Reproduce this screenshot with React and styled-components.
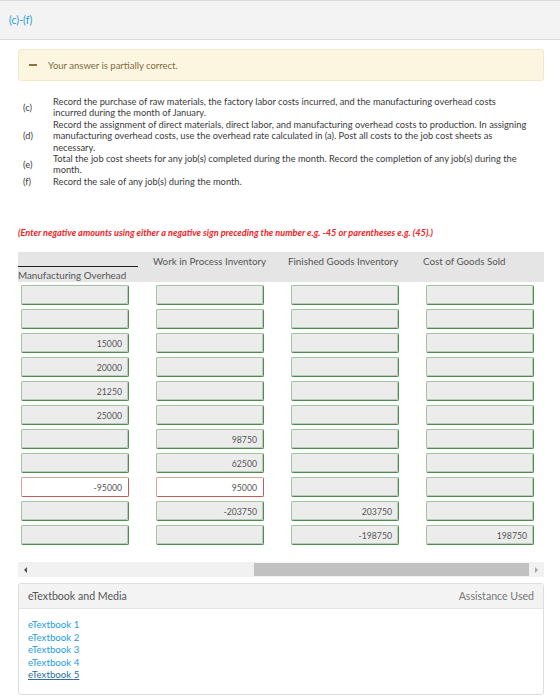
import React from 'react'
import styled, { createGlobalStyle } from 'styled-components'

const GlobalStyle = createGlobalStyle`
  body {
    margin: 0;
    background: #fff;
    font-family: Lato, 'Open Sans', sans-serif;
    color: #333;
  }
`

const Page = styled.div`
  width: 560px;
`

const SectionHeader = styled.div`
  height: 38px;
  display: flex;
  align-items: center;
  padding-left: 9px;
  background: #f3f3f3;
  border-top: 1px solid #dcdcdc;
  border-bottom: 1px solid #dcdcdc;
  color: #2b9be0;
  font-size: 10.5px;
`

const Body = styled.div`
  padding: 0 16px 0 18px;
`

const Banner = styled.div`
  margin-top: 9px;
  height: 32px;
  box-sizing: border-box;
  display: flex;
  align-items: center;
  gap: 11px;
  padding-left: 10px;
  background: #fcf5e0;
  border: 1px solid #f3e7c7;
  border-radius: 3px;
  color: #7d6b3f;
  font-size: 9.5px;
`

const Dash = styled.span`
  width: 8px;
  height: 2px;
  background: #8a733c;
`

const TaskList = styled.div`
  margin-top: 15px;
  display: grid;
  grid-template-columns: 30px 478px;
  align-items: center;
  padding-left: 5px;
  font-size: 9.3px;
  line-height: 11.4px;
  color: #3a3a3a;
`

const TaskLabel = styled.span``

const TaskText = styled.span``

const Note = styled.div`
  margin-top: 40px;
  color: #f0221e;
  font-size: 9.2px;
  font-weight: 700;
  font-style: italic;
  line-height: 12px;
`

const Scroller = styled.div`
  margin-top: 13px;
  width: 526px;
  overflow: hidden;
`

const Sheet = styled.div`
  display: grid;
  grid-template-columns: repeat(4, 135px);
  row-gap: 4px;
  color: #555;
`

const HeadRow = styled.div`
  grid-column: 1 / -1;
  display: grid;
  grid-template-columns: repeat(4, 135px);
  height: 30px;
  margin-bottom: -1px;
  background: #e5e5e5;
  width: 526px;
  font-size: 9.8px;
`

const HeadCell = styled.div`
  padding-top: 3px;
  white-space: nowrap;
`

const AccountHead = styled.div`
  display: flex;
  flex-direction: column;
  justify-content: flex-end;
`

const AccountTitle = styled.span`
  width: 120px;
  border-top: 1px solid #222;
  padding: 2px 0 1px;
  white-space: nowrap;
`

const Cell = styled.div`
  padding-left: 3px;
`

const Field = styled.div`
  box-sizing: border-box;
  width: 108px;
  height: 20px;
  display: flex;
  align-items: center;
  justify-content: flex-end;
  padding-right: 6px;
  border: 1px solid;
  border-radius: 2px;
  font-size: 8.7px;
  color: #555;
  background: ${p => (p.$wrong ? '#fff' : '#ececec')};
  border-color: ${p =>
    p.$wrong ? '#d9a0a0 #c25b5b #c25b5b #d9a0a0' : '#a2c4a2 #4f8c4f #4f8c4f #a2c4a2'};
  box-shadow: ${p =>
    p.$wrong ? 'none' : 'inset -1px -1px 0 rgba(90, 150, 90, 0.35)'};
`

const ScrollBar = styled.div`
  margin-top: 17px;
  width: 526px;
  height: 15px;
  display: flex;
  align-items: stretch;
  background: #f1f1f1;
`

const ScrollArrow = styled.div`
  width: 15px;
  display: flex;
  align-items: center;
  justify-content: center;
  &::before {
    content: '';
    border-top: 3px solid transparent;
    border-bottom: 3px solid transparent;
    ${p =>
      p.$right
        ? 'border-left: 3px solid #a3a3a3;'
        : 'border-right: 3px solid #505050;'}
  }
`

const ScrollTrack = styled.div`
  flex: 1;
  display: flex;
  align-items: center;
  justify-content: flex-end;
`

const ScrollThumb = styled.div`
  height: 13px;
  width: 275px;
  background: #c1c1c1;
`

const Panel = styled.div`
  margin-top: 6px;
  width: 526px;
  height: 112px;
  box-sizing: border-box;
  border: 1px solid #dedede;
  border-radius: 3px;
  overflow: hidden;
`

const PanelHead = styled.div`
  height: 24px;
  display: flex;
  align-items: center;
  justify-content: space-between;
  padding: 0 9px;
  background: #f3f3f3;
  border-bottom: 1px solid #e4e4e4;
  font-size: 10.6px;
  color: #555;
`

const Assist = styled.span`
  color: #777;
`

const LinkList = styled.div`
  display: flex;
  flex-direction: column;
  padding: 9px 9px 0;
  font-size: 9.7px;
  line-height: 12.5px;
`

const BookLink = styled.a`
  align-self: flex-start;
  color: ${p => (p.$active ? '#2d6ea0' : '#1e9be6')};
  text-decoration: ${p => (p.$active ? 'underline' : 'none')};
`

const tasks = [
  ['(c)', 'Record the purchase of raw materials, the factory labor costs incurred, and the manufacturing overhead costs incurred during the month of January.'],
  ['(d)', 'Record the assignment of direct materials, direct labor, and manufacturing overhead costs to production. In assigning manufacturing overhead costs, use the overhead rate calculated in (a). Post all costs to the job cost sheets as necessary.'],
  ['(e)', 'Total the job cost sheets for any job(s) completed during the month. Record the completion of any job(s) during the month.'],
  ['(f)', 'Record the sale of any job(s) during the month.'],
]

// one entry per row: [overhead, wip, finished goods, cogs]
const rows = [
  ['', '', '', ''],
  ['', '', '', ''],
  ['15000', '', '', ''],
  ['20000', '', '', ''],
  ['21250', '', '', ''],
  ['25000', '', '', ''],
  ['', '98750', '', ''],
  ['', '62500', '', ''],
  ['-95000', '95000', '', ''],
  ['', '-203750', '203750', ''],
  ['', '', '-198750', '198750'],
]

const wrongRow = 8

export default function App() {
  return (
    <Page>
      <GlobalStyle />
      <SectionHeader>(c)-(f)</SectionHeader>
      <Body>
        <Banner>
          <Dash />
          Your answer is partially correct.
        </Banner>

        <TaskList>
          {tasks.map(([label, text]) => (
            <React.Fragment key={label}>
              <TaskLabel>{label}</TaskLabel>
              <TaskText>{text}</TaskText>
            </React.Fragment>
          ))}
        </TaskList>

        <Note>
          (Enter negative amounts using either a negative sign preceding the number e.g. -45 or
          parentheses e.g. (45).)
        </Note>

        <Scroller>
          <Sheet>
            <HeadRow>
              <AccountHead>
                <AccountTitle>Manufacturing Overhead</AccountTitle>
              </AccountHead>
              <HeadCell>Work in Process Inventory</HeadCell>
              <HeadCell>Finished Goods Inventory</HeadCell>
              <HeadCell>Cost of Goods Sold</HeadCell>
            </HeadRow>
            {rows.map((row, r) =>
              row.map((value, c) => (
                <Cell key={`${r}-${c}`}>
                  <Field $wrong={r === wrongRow && c < 2}>{value}</Field>
                </Cell>
              ))
            )}
          </Sheet>
        </Scroller>

        <ScrollBar>
          <ScrollArrow />
          <ScrollTrack>
            <ScrollThumb />
          </ScrollTrack>
          <ScrollArrow $right />
        </ScrollBar>

        <Panel>
          <PanelHead>
            <span>eTextbook and Media</span>
            <Assist>Assistance Used</Assist>
          </PanelHead>
          <LinkList>
            {[1, 2, 3, 4, 5].map(n => (
              <BookLink key={n} href="#" $active={n === 5}>
                eTextbook {n}
              </BookLink>
            ))}
          </LinkList>
        </Panel>
      </Body>
    </Page>
  )
}
